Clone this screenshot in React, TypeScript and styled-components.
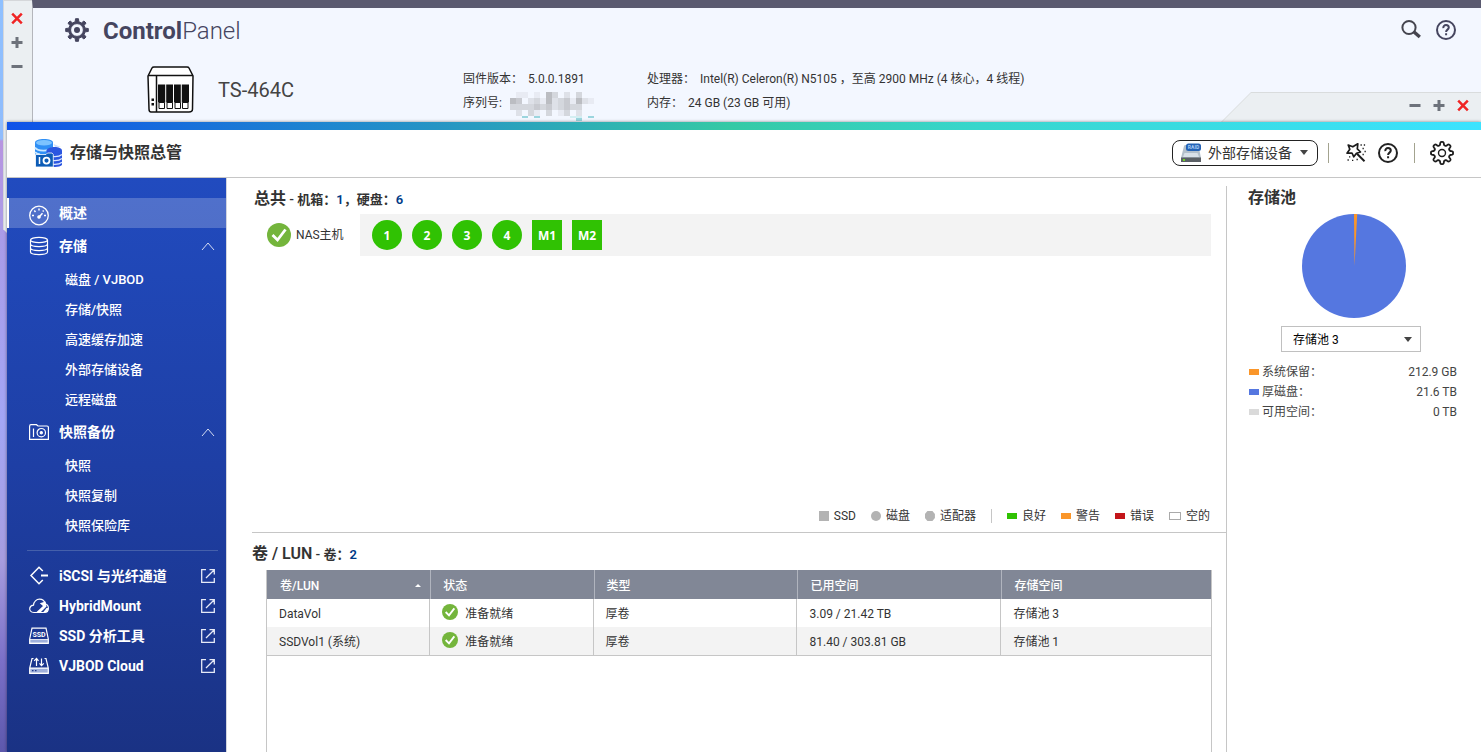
import React from "react";
import styled, { createGlobalStyle, css } from "styled-components";

const GlobalStyle = createGlobalStyle`
  *, *::before, *::after { box-sizing: border-box; }
  html, body, #root { height: 100%; margin: 0; }
  body {
    font-family: Roboto, "Noto Sans CJK SC", sans-serif;
    font-size: 12px;
    line-height: 20px;
    color: #333;
    overflow: hidden;
  }
  button, select { font: inherit; color: inherit; }
  a { color: inherit; text-decoration: none; }
  svg { display: block; flex: none; overflow: visible; }
`;

/* ---------- desktop and windows ---------- */

const Desktop = styled.div`
  position: relative;
  height: 100vh;
  overflow: hidden;
  background: linear-gradient(#8fc0ff 0, #8fbcfc 139px, #b795e0 141px, #a99ce8 240px, #a3a6f5 420px, #a79ddf 560px, #7b70c8 660px, #5d58ac 752px);
`;

const BackWindow = styled.section`
  position: absolute;
  inset: 0 0 auto 3px;
  height: 233px;
  display: flex;
`;

const SideTab = styled.div`
  width: 29px;
  display: flex;
  flex-direction: column;
  align-items: center;
  gap: 12px;
  padding: 11px 3px 0 0;
  background: #ebeff2;
  border-top: 1px solid #d5d7da;
  border-left: 1px solid #d5d7da;
  clip-path: polygon(0 0, 100% 0, 100% 100%, 4px 100%, 0 229px);
`;

const BackBody = styled.div`
  flex: 1;
  border-top: 8px solid #5a5a70;
  border-left: 1px solid #b4b6bc;
  background: #f3f7ff;
`;

const BackHeader = styled.header`
  display: flex;
  align-items: center;
  gap: 14px;
  height: 44px;
  padding: 0 25px 0 32px;
  color: #45455f;
`;

const PanelTitle = styled.h1`
  flex: 1;
  margin: 0;
  padding-top: 2px;
  font-size: 24px;
  line-height: 30px;
  font-weight: 300;
  strong { font-weight: 700; }
`;

const IconButton = styled.button`
  display: flex;
  padding: 0;
  border: 0;
  background: none;
  cursor: pointer;
`;

const DeviceRow = styled.div`
  display: flex;
  align-items: center;
  height: 76px;
  padding-left: 114px;
`;

const DeviceName = styled.div`
  width: 269px;
  padding-left: 24px;
  font-size: 20px;
  line-height: 28px;
  color: #444;
`;

const DeviceFacts = styled.dl`
  display: grid;
  grid-template-columns: 184px auto;
  row-gap: 4px;
  margin: 0;
  padding-top: 2px;
`;

const Fact = styled.div`
  display: flex;
  gap: 5px;
  height: 20px;
  white-space: pre;
  dt, dd { margin: 0; }
`;

const FrontWindow = styled.section`
  position: absolute;
  inset: 122px 0 0 7px;
  display: flex;
  flex-direction: column;
  background: #fff;
  box-shadow: 0 0 3px rgba(0, 0, 0, 0.45);
  &::before {
    content: "";
    height: 8px;
    background: linear-gradient(90deg, #0f52e8 0%, #1f87cf 22%, #2694c4 29%, #35c9a5 49%, #38d6cc 66%, #3be3ff 100%);
  }
`;

const WindowTab = styled.div`
  position: absolute;
  top: 92px;
  right: 0;
  width: 260px;
  height: 30px;
  display: flex;
  align-items: center;
  justify-content: flex-end;
  gap: 12px;
  padding: 0 12px 4px 0;
  background: #d9dcdd;
  clip-path: polygon(30px 0, 100% 0, 100% 100%, 0 100%);
  &::before {
    content: "";
    position: absolute;
    inset: 1px 0 0 0;
    background: #ebeff2;
    clip-path: polygon(30px 0, 100% 0, 100% 100%, 1px 100%);
  }
  button { position: relative; }
`;

/* ---------- storage manager header ---------- */

const AppHeader = styled.header`
  display: flex;
  align-items: center;
  height: 48px;
  padding: 0 27px 2px 28px;
  border-bottom: 1px solid #c6c6c6;
`;

const AppTitle = styled.h2`
  flex: 1;
  margin: 0 0 0 8px;
  font-size: 16px;
  line-height: 24px;
  font-weight: 600;
`;

const DeviceMenu = styled.button`
  display: flex;
  align-items: center;
  gap: 6px;
  height: 26px;
  width: 146px;
  padding: 0 7px;
  border: 1px solid #222;
  border-radius: 8px;
  background: #fff;
  font-size: 14px;
  line-height: 20px;
  white-space: nowrap;
`;

const Caret = styled.span`
  margin-left: 2px;
  border: 4px solid transparent;
  border-top: 5px solid #444;
  border-bottom: 0;
`;

const HeaderRule = styled.span`
  width: 1px;
  height: 20px;
  margin: 0 15px 0 10px;
  background: #a3a38f;
`;

const HeaderTools = styled.div`
  display: flex;
  align-items: center;
  gap: 12px;
  margin-right: 6px;
  color: #222;
`;

/* ---------- body ---------- */

const AppBody = styled.div`
  flex: 1;
  min-height: 0;
  display: grid;
  grid-template-columns: 220px minmax(0, 1fr) 255px;
`;

const Sidebar = styled.nav`
  padding-top: 20px;
  border-right: 1px solid #d2d5de;
  background: linear-gradient(#214bbf, #1e3fa5 50%, #1a3284);
  color: #fff;
  font-size: 14px;
`;

const NavItem = styled.a<{ $active?: boolean; $tall?: boolean }>`
  display: flex;
  align-items: center;
  gap: 10px;
  width: 100%;
  height: ${(p) => (p.$tall ? 36 : 30)}px;
  padding: 0 11px 0 22px;
  border: 0;
  background: none;
  font-weight: 700;
  text-align: left;
  cursor: pointer;
  span { flex: 1; }
  ${(p) => p.$active && css`
    padding-left: 20px;
    border-left: 2px solid #fff;
    background: rgba(255, 255, 255, 0.21);
  `}
`;

const SubItem = styled.a`
  display: block;
  height: 30px;
  padding-left: 58px;
  font-size: 13px;
  line-height: 32px;
  font-weight: 500;
`;

const NavRule = styled.hr`
  height: 1px;
  margin: 10px 8px 10px 20px;
  border: 0;
  background: #4560ab;
`;

const Main = styled.main`
  display: flex;
  flex-direction: column;
  min-height: 0;
`;

const Overview = styled.section`
  display: flex;
  flex-direction: column;
  height: 355px;
  margin-left: 25px;
  padding: 10px 15px 6px 2px;
  border-bottom: 1px solid #c6c6c6;
`;

const Heading = styled.h3`
  margin: 0;
  font-size: 16px;
  line-height: 22px;
  font-weight: 600;
  white-space: pre;
  small { font-size: 13px; font-weight: 600; }
  b { color: #003a87; font-weight: 600; }
`;

const Enclosure = styled.div`
  display: flex;
  align-items: center;
  margin-top: 3px;
`;

const HostLabel = styled.div`
  display: flex;
  align-items: center;
  gap: 5px;
  width: 106px;
  padding-left: 13px;
`;

const DriveBay = styled.div`
  flex: 1;
  display: flex;
  gap: 10px;
  padding: 6px 12px;
  background: #f3f3f3;
`;

const Drive = styled.button<{ $round?: boolean }>`
  width: 30px;
  height: 30px;
  padding: 1px 0 0;
  border: 0;
  border-radius: ${(p) => (p.$round ? "50%" : "0")};
  background: #30c203;
  color: #fff;
  font-family: "Open Sans", sans-serif;
  font-size: 12px;
  font-weight: 700;
`;

const Legend = styled.ul`
  display: flex;
  align-items: center;
  justify-content: flex-end;
  gap: 15px;
  margin: auto 0 0;
  padding: 0 1px 0 0;
  list-style: none;
`;

const LegendItem = styled.li`
  display: flex;
  align-items: center;
  gap: 5px;
`;

const Swatch = styled.i<{ $color: string; $shape?: "square" | "dot" | "hex" | "empty" }>`
  width: 10px;
  height: 6px;
  background: ${(p) => p.$color};
  ${(p) => p.$shape === "square" && css`height: 10px;`}
  ${(p) => p.$shape === "dot" && css`height: 10px; border-radius: 50%;`}
  ${(p) => p.$shape === "hex" && css`height: 10px; clip-path: polygon(25% 0, 75% 0, 100% 30%, 100% 70%, 75% 100%, 25% 100%, 0 70%, 0 30%);`}
  ${(p) => p.$shape === "empty" && css`width: 12px; height: 8px; border: 1px solid #aaa;`}
`;

const LegendRule = styled.li`
  width: 1px;
  height: 14px;
  background: #c6c6c6;
`;

const Volumes = styled.section`
  flex: 1;
  display: flex;
  flex-direction: column;
  padding: 10px 14px 0 25px;
`;

const TableFrame = styled.div`
  flex: 1;
  margin: 4px 0 0 14px;
  border: 1px solid #c6c6c6;
  border-top-width: 0;
  border-bottom: 0;
`;

const VolumeTable = styled.table`
  width: 100%;
  table-layout: fixed;
  border-collapse: separate;
  border-spacing: 0;
  border-bottom: 1px solid #c6c6c6;
  th, td { padding: 2px 12px 0; text-align: left; }
  th {
    height: 29px;
    background: #818796;
    color: #fff;
    font-weight: 500;
  }
  th:first-child { padding: 2px 9px 0 13px; }
  th + th { border-left: 1px solid #b0b4be; }
  td { height: 28px; border-right: 1px solid #c6c6c6; }
  td:last-child { border-right: 0; }
  tbody tr:nth-child(even) { background: #f3f3f3; }
`;

const Spread = styled.div`
  display: flex;
  align-items: center;
  justify-content: space-between;
`;

const SortMark = styled.span`
  border: 3px solid transparent;
  border-bottom-color: #fff;
  border-top: 0;
`;

const Status = styled.span`
  display: flex;
  align-items: flex-start;
  gap: 7px;
`;

const PoolPane = styled.aside`
  margin-top: 8px;
  padding: 1px 24px 0 21px;
  border-left: 1px solid #c6c6c6;
  svg { margin: 5px 0 8px 54px; }
`;

const PoolPicker = styled.label`
  position: relative;
  display: block;
  width: 140px;
  margin-left: 33px;
  select {
    appearance: none;
    display: block;
    width: 100%;
    height: 26px;
    padding: 2px 11px 0;
    border: 1px solid #c0c0c0;
    border-radius: 0;
    background: #fff;
    color: #000;
  }
  span { position: absolute; right: 9px; top: 11px; }
`;

const PoolFacts = styled.dl`
  margin: 10px 0 0 1px;
`;

const PoolFact = styled.div`
  display: flex;
  align-items: center;
  gap: 3px;
  color: #444;
  dt { flex: 1; }
  dd { margin: 0; }
`;

/* ---------- drawings ---------- */

function gearPath(c: number, outer: number, inner: number, teeth: number, wide: number, narrow: number) {
  const pts: string[] = [];
  const at = (r: number, a: number) => `${(c + r * Math.sin(a)).toFixed(2)} ${(c - r * Math.cos(a)).toFixed(2)}`;
  for (let i = 0; i < teeth; i++) {
    const a = (i * 2 * Math.PI) / teeth;
    pts.push(at(inner, a - wide), at(outer, a - narrow), at(outer, a + narrow), at(inner, a + wide));
  }
  return `M${pts.join("L")}Z`;
}

function softGearPath(c: number, mid: number, swing: number, teeth: number) {
  const steps = 160;
  const pts = Array.from({ length: steps }, (_, i) => {
    const a = (i * 2 * Math.PI) / steps;
    const r = mid + swing * Math.tanh(2.2 * Math.cos(teeth * a));
    return `${(c + r * Math.sin(a)).toFixed(2)} ${(c - r * Math.cos(a)).toFixed(2)}`;
  });
  return `M${pts.join("L")}Z`;
}

const SolidGear = () => (
  <svg width="24" height="24" viewBox="0 0 24 24" aria-hidden="true">
    <path fill="#45455f" fillRule="evenodd" strokeLinejoin="round" stroke="#45455f" d={gearPath(12, 11.4, 8.4, 8, 0.22, 0.13) + "M12 5.6a6.4 6.4 0 1 0 0 12.8a6.4 6.4 0 1 0 0-12.8Z"} />
    <circle cx="12" cy="12" r="3" fill="#45455f" />
  </svg>
);

const LineGear = () => (
  <svg width="24" height="24" viewBox="0 0 24 24" fill="none" stroke="#1c1c1c" strokeWidth="1.8" strokeLinejoin="round" aria-hidden="true">
    <path d={softGearPath(12, 9.5, 1.6, 8)} />
    <circle cx="12" cy="12" r="3.5" strokeWidth="1.4" />
  </svg>
);

const SearchIcon = () => (
  <svg width="20" height="20" viewBox="0 0 20 20" fill="none" stroke="#45454f" aria-hidden="true">
    <circle cx="7" cy="7.5" r="6.6" strokeWidth="2" />
    <path d="M11.8 11.7L17.8 17.1" strokeWidth="3.4" />
  </svg>
);

const HelpIcon = () => (
  <svg width="20" height="20" viewBox="0 0 20 20" fill="none" stroke="currentColor" strokeWidth="2" aria-hidden="true">
    <circle cx="10" cy="10" r="9" />
    <path d="M7.3 8.1C7.2 6.2 8.4 5.1 10 5.1c1.7 0 2.8 1 2.8 2.5 0 2-2.7 2.1-2.7 4.3M10.1 13.2v2" />
  </svg>
);

const WandIcon = () => (
  <svg width="22" height="22" viewBox="0 0 22 22" fill="none" stroke="#1c1c1c" strokeWidth="1.7" strokeLinejoin="round" aria-hidden="true">
    <path d="M8.8 4.8L13.8 1.8L13.3 6.8L16.5 10L12.5 11.2L9.8 14.8L8 11L3 11.2L5.8 7.2L4.2 3Z" />
    <path d="M13 11.8L20.5 19.3" strokeWidth="2" />
    <path strokeWidth="1.3" d="M16.5 3h1.3M19.8 3h1.3M18.500 6.500h1.300M20.500 9.500h1.300M18.500 12.500h1.300M5 14.800h1.300M3.500 18h1.300M8 18.300h1.300M12.500 17.500h1.300" />
  </svg>
);

const ControlMark = ({ kind }: { kind: "close" | "plus" | "minus" }) => (
  <svg width="12" height="12" viewBox="0 0 12 12" fill="none" strokeWidth="3" stroke={kind === "close" ? "#f02424" : "#6d727b"} aria-hidden="true">
    {kind === "close" && <path strokeWidth="2.5" d="M1.2 1.7L10.8 11.3M10.8 1.7L1.2 11.3" />}
    {kind === "plus" && <path d="M.5 6.5h11M6 1v11" />}
    {kind === "minus" && <path d="M.5 6.5h11" />}
  </svg>
);

const NasIcon = () => (
  <svg width="47" height="47" viewBox="0 1 47 47" fill="none" stroke="#111" strokeWidth="1.5" aria-hidden="true">
    <path fill="#fff" d="M1 10L5 2Q5.5 1 7 1H40Q41.5 1 42 2L46 10L45.5 43Q45.5 46 42 46H4Q2 46 2 43Z" />
    <path d="M1 9.5H46M9.5 10V46" />
    <path fill="#111" strokeWidth="0" d="M11 18.5h7.2v18H11zM19.2 18.5h6.8v18h-6.8zM27 18.5h6.8v18H27zM34.8 18.5H42v18h-7.2z" />
    <path strokeWidth="1" d="M12 36.5h5.5v6H12zM20 36.5h5.5v6H20zM28 36.5h5.5v6H28zM35.5 36.5H41v6h-5.5z" />
    <path stroke="none" fill="#111" d="M4.5 32.5H7V35H4.5zM4.5 37H7v2.5H4.5z" />
  </svg>
);

const StorageLogo = () => (
  <svg width="27" height="28" viewBox="0 0 27 28" aria-hidden="true">
    <path fill="#2f8ff5" d="M0 3.5C0 1.5 4 0 9 0s9 1.5 9 3.5V16H0Z" />
    <ellipse cx="9" cy="3.8" rx="8" ry="2.8" fill="#7cc3ff" />
    <path fill="none" stroke="#c9e7ff" strokeWidth="1.8" d="M0 8.5c2 3.8 14 4.4 18 0M0 13c1 1.5 3 2.2 5 2.5" />
    <path fill="#cfe0fb" d="M18.5 5L26 8H20Z" />
    <path fill="#2b56e0" d="M11.5 11.5C12 9.5 15.5 8 19.5 8S27 9.5 27 11.5V26c-1 1.2-4 2-7 2h-8Z" />
    <path fill="none" stroke="#dbe6ff" strokeWidth="1.2" d="M18 17.5c4 .3 7-.3 9-2M18 21.5c4 .3 7-.3 9-2M18 25.3c4 .3 7-.3 9-2" />
    <path fill="#0d5cb6" stroke="#fff" strokeWidth=".8" d="M.5 15.5H11L12.5 14H17L18.3 15.5V28H.5Z" />
    <circle cx="11.5" cy="21.6" r="3" fill="none" stroke="#fff" strokeWidth="1.8" />
    <path stroke="#fff" strokeWidth="1.5" d="M4.5 18v7" />
  </svg>
);

const RaidIcon = () => (
  <svg width="22" height="20" viewBox="0 0 22 20" aria-hidden="true">
    <path fill="#b3bfca" d="M4 3Q4.3 2 5.5 2H17Q18.3 2 18.6 3L21 15H1Z" />
    <path fill="#d8e0e8" d="M4.5 10h13l1.5 4H3Z" />
    <rect x="1" y="14.5" width="20" height="4.5" fill="#5b6066" />
    <rect x="3" y="16" width="2" height="2" fill="#6fd325" />
    <rect x="6" y=".5" width="15" height="7.5" rx="2.5" fill="#2462b5" />
    <text x="13.5" y="6" textAnchor="middle" fontFamily="Roboto, sans-serif" fontSize="5" fontWeight="700" fill="#a9ccf5">RAID</text>
  </svg>
);

const CheckIcon = ({ size }: { size: number }) => (
  <svg width={size} height={size} viewBox="0 0 24 24" role="img" aria-label="良好">
    <circle cx="12" cy="12" r="12" fill="#74b53c" />
    <path d="M5.5 12L10.5 17L18.5 6.5" fill="none" stroke="#fff" strokeWidth="2.8" />
  </svg>
);

/* The serial number is shown as a coarse mosaic: each digit picks a grey level. */
const mosaicRows = [
  ".11.1.53.2.3..",
  "54.23152341521",
  "333343423433..",
  ".2.31.3.13.2..",
];
const levels = ["", "#e8ebf3", "#dee1e8", "#d4d7dd", "#c8cad0", "#bbbdc2"];

const Mosaic = () => (
  <svg width="84" height="30" viewBox="0 1 84 30" role="img" aria-label="序列号已隐藏">
    {mosaicRows.map((row, y) =>
      row.split("").map((cell, x) => cell !== "." && <rect key={`${x}-${y}`} x={x * 6} y={y * 6} width="6" height="6" fill={levels[Number(cell)]} />)
    )}
    <path fill="#9bd5de" d="M12 24h6v2h-6zM24 24h6v2h-6zM66 26h6v3h-6zM78 24h6v2h-6z" />
    <path fill="#d3eef2" d="M60 24h12v2H60z" />
  </svg>
);

const NavIcon = ({ children }: { children: React.ReactNode }) => (
  <svg width="20" height="20" viewBox="0 0 20 20" fill="none" stroke="#fff" strokeWidth="1.2" aria-hidden="true">{children}</svg>
);

const GaugeIcon = () => (
  <NavIcon>
    <circle cx="10" cy="12.5" r="9.3" strokeWidth="1.3" />
    <path strokeWidth="1.5" d="M10 5.5v2M5.3 7.5l1.2 1.4M3 12.5h2M15 12.5h2M14.7 7.5l-1 1" />
    <circle cx="10" cy="14" r="1.2" fill="#fff" />
    <path strokeWidth="1.5" d="M10 14L13.5 10.3" />
  </NavIcon>
);

const DisksIcon = () => (
  <NavIcon>
    <ellipse cx="10" cy="4" rx="8.5" ry="2.7" />
    <path d="M1.5 4v12c0 3.4 17 3.4 17 0V4M1.5 8c0 3.4 17 3.4 17 0M1.5 12c0 3.4 17 3.4 17 0" />
  </NavIcon>
);

const SnapshotIcon = () => (
  <NavIcon>
    <path d="M.6 4.5Q.6 2.7 2 2.7H7.5L9 4H18Q19.4 4 19.4 5.2V17.4H.6ZM4.5 6.5v8.5" />
    <circle cx="12.3" cy="10.7" r="4.2" />
    <circle cx="12.3" cy="10.7" r="1.1" fill="#fff" />
  </NavIcon>
);

const IscsiIcon = () => (
  <NavIcon>
    <path strokeWidth="1.5" d="M13.8 5L10 1.2L2 9.5L10 17.8L13.8 14" />
    <path strokeWidth="2" d="M12 9.5H19" />
  </NavIcon>
);

const HybridIcon = () => (
  <NavIcon>
    <path d="M5 16.5C1.5 16.5.3 14 .8 12 1.3 10 3.3 9.3 4.5 9.2 4.7 5.5 7.5 3.2 10.5 3.2c2.8 0 5 1.8 5.7 4.5 2 .6 3.2 2.3 3.2 4.5 0 2.6-1.8 4.3-4 4.3Z" />
    <path fill="#fff" stroke="none" d="M7 16.5L14 10L10.8 7.2L16.5 5.5L17.5 10.5Q15.5 12.5 11.5 16.5Z" />
    <path fill="#fff" stroke="none" d="M14 16.5L17.5 12L19.5 12Q19 16.5 15.5 16.5Z" />
  </NavIcon>
);

const SsdIcon = () => (
  <NavIcon>
    <path d="M3 2.2H17L19.3 13V17.3H.7V13Z" />
    <path fill="#9fb0dc" strokeWidth=".8" d="M.9 13.5H19.1V17H.9Z" />
    <text x="10" y="10.5" textAnchor="middle" fontFamily="Roboto, sans-serif" fontSize="7" fontWeight="700" fill="#fff" stroke="none">SSD</text>
  </NavIcon>
);

const VjbodIcon = () => (
  <NavIcon>
    <path d="M4.5 2.5H3L.7 12V17.3H19.3V12L17 2.5H15.5M.7 12H19.3" />
    <path fill="#9fb0dc" strokeWidth=".8" d="M.9 12.5H19.1V17H.9Z" />
    <path stroke="#1c3689" d="M3 14.7h1.5M6 14.7h1.5" />
    <path strokeWidth="1.2" d="M7.5 10V2.5M5.2 4.8L7.5 2.3L9.5 4.8M12.5 2.5V9.5M10.5 7.3L12.5 9.7L14.8 7.3" />
  </NavIcon>
);

const Chevron = () => (
  <svg width="14" height="9" viewBox="0 0 14 9" fill="none" stroke="#d5dcf2" aria-hidden="true"><path d="M1 8L7 1L13 8" /></svg>
);

const OpenIcon = () => (
  <svg width="14" height="14" viewBox="0 0 14 14" fill="none" stroke="#e6eaf7" strokeWidth="1.3" aria-hidden="true">
    <path d="M5 .7H.7V13.3H13.3V9M8.5 .7H13.3V5.5M13.3 .7L5 9" />
  </svg>
);

const PoolPie = () => (
  <svg width="104" height="104" viewBox="0 0 104 104" role="img" aria-label="存储池 3 用量">
    <circle cx="52" cy="52" r="52" fill="#5577e0" />
    <path fill="#fa962a" d="M52.5 52L52 0A52 52 0 0 1 55.2 .1Z" />
  </svg>
);

/* ---------- data ---------- */

const storageLinks = ["磁盘 / VJBOD", "存储/快照", "高速缓存加速", "外部存储设备", "远程磁盘"];
const backupLinks = ["快照", "快照复制", "快照保险库"];
const toolLinks = [
  { label: "iSCSI 与光纤通道", icon: <IscsiIcon /> },
  { label: "HybridMount", icon: <HybridIcon /> },
  { label: "SSD 分析工具", icon: <SsdIcon /> },
  { label: "VJBOD Cloud", icon: <VjbodIcon /> },
];
const volumes = [
  { name: "DataVol", type: "厚卷", used: "3.09 / 21.42 TB", pool: "存储池 3" },
  { name: "SSDVol1 (系统)", type: "厚卷", used: "81.40 / 303.81 GB", pool: "存储池 1" },
];
const poolFacts = [
  { label: "系统保留：", value: "212.9 GB", color: "#fa962a" },
  { label: "厚磁盘：", value: "21.6 TB", color: "#5577e0" },
  { label: "可用空间：", value: "0 TB", color: "#dadada" },
];

export default function App() {
  return (
    <Desktop>
      <GlobalStyle />
      <BackWindow>
        <SideTab>
          <IconButton aria-label="关闭"><ControlMark kind="close" /></IconButton>
          <IconButton aria-label="最大化"><ControlMark kind="plus" /></IconButton>
          <IconButton aria-label="最小化"><ControlMark kind="minus" /></IconButton>
        </SideTab>
        <BackBody>
          <BackHeader>
            <SolidGear />
            <PanelTitle><strong>Control</strong>Panel</PanelTitle>
            <IconButton aria-label="搜索"><SearchIcon /></IconButton>
            <IconButton aria-label="帮助"><HelpIcon /></IconButton>
          </BackHeader>
          <DeviceRow>
            <NasIcon />
            <DeviceName>TS-464C</DeviceName>
            <DeviceFacts>
              <Fact><dt>固件版本：</dt><dd>5.0.0.1891</dd></Fact>
              <Fact><dt>处理器：</dt><dd>Intel(R) Celeron(R) N5105 ，至高 2900 MHz (4 核心，4 线程)</dd></Fact>
              <Fact><dt>序列号: </dt><dd><Mosaic /></dd></Fact>
              <Fact><dt>内存：</dt><dd>24 GB (23 GB 可用)</dd></Fact>
            </DeviceFacts>
          </DeviceRow>
        </BackBody>
      </BackWindow>

      <WindowTab>
        <IconButton aria-label="最小化"><ControlMark kind="minus" /></IconButton>
        <IconButton aria-label="最大化"><ControlMark kind="plus" /></IconButton>
        <IconButton aria-label="关闭"><ControlMark kind="close" /></IconButton>
      </WindowTab>

      <FrontWindow>
        <AppHeader>
          <StorageLogo />
          <AppTitle>存储与快照总管</AppTitle>
          <DeviceMenu><RaidIcon />外部存储设备<Caret /></DeviceMenu>
          <HeaderRule />
          <HeaderTools>
            <IconButton aria-label="向导"><WandIcon /></IconButton>
            <IconButton aria-label="帮助"><HelpIcon /></IconButton>
          </HeaderTools>
          <HeaderRule />
          <IconButton aria-label="设置"><LineGear /></IconButton>
        </AppHeader>

        <AppBody>
          <Sidebar>
            <NavItem href="#overview" $active><GaugeIcon /><span>概述</span></NavItem>
            <NavItem as="button" $tall><DisksIcon /><span>存储</span><Chevron /></NavItem>
            {storageLinks.map((t) => <SubItem key={t} href="#storage">{t}</SubItem>)}
            <NavItem as="button" $tall><SnapshotIcon /><span>快照备份</span><Chevron /></NavItem>
            {backupLinks.map((t) => <SubItem key={t} href="#backup">{t}</SubItem>)}
            <NavRule />
            {toolLinks.map((t) => (
              <NavItem key={t.label} href="#tools">{t.icon}<span>{t.label}</span><OpenIcon /></NavItem>
            ))}
          </Sidebar>

          <Main>
            <Overview>
              <Heading>总共<small> - 机箱：<b>1</b>，硬盘：<b>6</b></small></Heading>
              <Enclosure>
                <HostLabel><CheckIcon size={24} />NAS主机</HostLabel>
                <DriveBay>
                  {["1", "2", "3", "4"].map((n) => <Drive key={n} $round>{n}</Drive>)}
                  {["M1", "M2"].map((n) => <Drive key={n}>{n}</Drive>)}
                </DriveBay>
              </Enclosure>
              <Legend>
                <LegendItem><Swatch $color="#b3b3b3" $shape="square" />SSD</LegendItem>
                <LegendItem><Swatch $color="#b3b3b3" $shape="dot" />磁盘</LegendItem>
                <LegendItem><Swatch $color="#b3b3b3" $shape="hex" />适配器</LegendItem>
                <LegendRule />
                <LegendItem><Swatch $color="#30c203" />良好</LegendItem>
                <LegendItem><Swatch $color="#fa962a" />警告</LegendItem>
                <LegendItem><Swatch $color="#c3151a" />错误</LegendItem>
                <LegendItem><Swatch $color="#fff" $shape="empty" />空的</LegendItem>
              </Legend>
            </Overview>

            <Volumes>
              <Heading>卷 / LUN<small> - 卷：<b>2</b></small></Heading>
              <TableFrame>
                <VolumeTable>
                  <colgroup>
                    <col width="17.3%" /><col width="17.3%" /><col width="21.6%" /><col width="21.6%" /><col />
                  </colgroup>
                  <thead>
                    <tr>
                      <th><Spread>卷/LUN<SortMark /></Spread></th>
                      <th>状态</th><th>类型</th><th>已用空间</th><th>存储空间</th>
                    </tr>
                  </thead>
                  <tbody>
                    {volumes.map((v) => (
                      <tr key={v.name}>
                        <td>{v.name}</td>
                        <td><Status><CheckIcon size={16} />准备就绪</Status></td>
                        <td>{v.type}</td><td>{v.used}</td><td>{v.pool}</td>
                      </tr>
                    ))}
                  </tbody>
                </VolumeTable>
              </TableFrame>
            </Volumes>
          </Main>

          <PoolPane>
            <Heading>存储池</Heading>
            <PoolPie />
            <PoolPicker>
              <select aria-label="存储池" defaultValue="3">
                <option value="1">存储池 1</option>
                <option value="3">存储池 3</option>
              </select>
              <Caret />
            </PoolPicker>
            <PoolFacts>
              {poolFacts.map((f) => (
                <PoolFact key={f.label}><Swatch $color={f.color} /><dt>{f.label}</dt><dd>{f.value}</dd></PoolFact>
              ))}
            </PoolFacts>
          </PoolPane>
        </AppBody>
      </FrontWindow>
    </Desktop>
  );
}
